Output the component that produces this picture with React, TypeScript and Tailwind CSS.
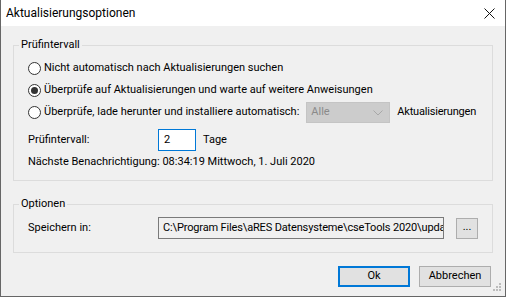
import type { ReactNode } from 'react';

function Radio({ checked, children }: { checked?: boolean; children: ReactNode }) {
  return (
    <label className="flex h-[22px] items-center">
      <span className="flex h-[13px] w-[13px] items-center justify-center rounded-full border border-[#333] bg-white">
        {checked && <span className="h-[7px] w-[7px] rounded-full bg-[#333]" />}
      </span>
      <span className="ml-[3px]">{children}</span>
    </label>
  );
}

function Group({ title, className, children }: { title: string; className: string; children: ReactNode }) {
  return (
    <fieldset className={`mx-[12px] border border-[#dcdcdc] ${className}`}>
      <legend className="ml-[5px] px-[2px] leading-[14px]">{title}</legend>
      <div className="pl-[14px]">{children}</div>
    </fieldset>
  );
}

function Grip() {
  return (
    <svg width="8" height="8" viewBox="0 0 8 8" className="absolute bottom-[5px] right-[4px]">
      {[
        [6, 0],
        [3, 3],
        [6, 3],
        [0, 6],
        [3, 6],
        [6, 6],
      ].map(([x, y]) => (
        <rect key={`${x}-${y}`} x={x} y={y} width="2" height="2" fill="#bcbcbc" />
      ))}
    </svg>
  );
}

export default function App() {
  return (
    <div className="relative flex h-[297px] w-[506px] flex-col border-x border-b border-[#666] bg-[#f0f0f0] font-['Roboto',sans-serif] text-[11px] text-black">
      <div className="flex h-[26px] shrink-0 items-center justify-between bg-white pl-[5px] pr-[9px]">
        <span className="text-[12px]">Aktualisierungsoptionen</span>
        <svg width="11" height="11" viewBox="0 0 11 11" className="mr-[1px] mt-[1px]">
          <path d="M0.5 0.5L10.5 10.5M10.5 0.5L0.5 10.5" stroke="#111" strokeWidth="1" />
        </svg>
      </div>

      <div className="flex flex-1 flex-col pt-[12px]">
        <Group title="Prüfintervall" className="h-[143px]">
          <div className="mt-[5px]">
            <Radio>Nicht automatisch nach Aktualisierungen suchen</Radio>
            <Radio checked>Überprüfe auf Aktualisierungen und warte auf weitere Anweisungen</Radio>
            <div className="flex h-[23px] items-center">
              <Radio>Überprüfe, lade herunter und installiere automatisch:</Radio>
              <div className="ml-[7px] flex h-[21px] w-[84px] items-center justify-between border border-[#c4c4c4] bg-[#cccccc] pl-[4px] pr-[6px] text-[#8a8a8a]">
                <span>Alle</span>
                <svg width="10" height="6" viewBox="0 0 10 6">
                  <path d="M0.5 0.5L5 5L9.5 0.5" fill="none" stroke="#a8a8a8" strokeWidth="1" />
                </svg>
              </div>
              <span className="ml-[7px] tracking-[-0.2px]">Aktualisierungen</span>
            </div>
            <div className="mt-[5px] flex items-center">
              <span className="w-[130px]">Prüfintervall:</span>
              <div className="h-[22px] w-[38px] border border-[#0078d7] bg-white pl-[5px] pt-[2px]">2</div>
              <span className="ml-[7px]">Tage</span>
            </div>
            <div className="mt-[4px] leading-[14px]">Nächste Benachrichtigung: 08:34:19 Mittwoch, 1. Juli 2020</div>
          </div>
        </Group>

        <Group title="Optionen" className="mt-[16px] h-[56px]">
          <div className="mt-[6px] flex items-center">
            <span className="w-[130px]">Speichern in:</span>
            <div className="h-[22px] w-[286px] overflow-hidden whitespace-nowrap border border-[#7a7a7a] bg-[#f0f0f0] pl-[4px] leading-[20px] tracking-[-0.15px]">
              C:\Program Files\aRES Datensysteme\cseTools 2020\upda
            </div>
            <button
              type="button"
              className="ml-[12px] h-[21px] w-[22px] border border-[#adadad] bg-[#e1e1e1] pb-[3px] leading-[14px]"
            >
              ...
            </button>
          </div>
        </Group>

        <div className="mr-[14px] mt-[13px] flex justify-end gap-[9px]">
          <button type="button" className="h-[21px] w-[72px] border-2 border-[#0078d7] bg-[#e1e1e1]">
            Ok
          </button>
          <button type="button" className="h-[21px] w-[72px] border border-[#adadad] bg-[#e1e1e1]">
            Abbrechen
          </button>
        </div>
      </div>
      <Grip />
    </div>
  );
}
